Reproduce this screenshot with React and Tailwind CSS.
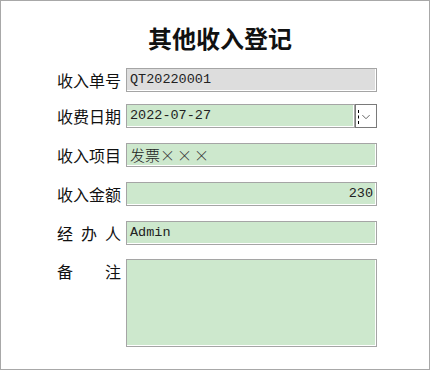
import React from 'react';

const cjk = { fontFamily: '"Noto Sans CJK SC", sans-serif' };
const mono = { fontFamily: '"Liberation Mono", "Noto Sans CJK SC", monospace' };

const Label = ({ chars }) => (
  <div className="w-[64px] flex justify-between text-[16px] leading-[24px] text-[#111]" style={cjk}>
    {chars.map((c, i) => (
      <span key={i}>{c}</span>
    ))}
  </div>
);

const Field = ({ value, bg = 'bg-[#cde8cd]', right }) => (
  <div
    className={`flex-1 h-[24px] border border-[#a5a5a5] ${bg} shadow-[inset_-1px_-1px_0_#fff] flex items-center px-[3px] text-[13.5px] text-[#222] ${right ? 'justify-end' : ''}`}
    style={mono}
  >
    {value}
  </div>
);

const Row = ({ label, children, className = '' }) => (
  <div className={`flex items-start gap-[5px] ${className}`}>
    <Label chars={label} />
    {children}
  </div>
);

export default function App() {
  return (
    <div className="w-[430px] h-[370px] border border-[#a8a8a8] bg-white flex flex-col">
      <div className="mt-[24px] pl-[10px] text-center text-[24px] leading-[26px] font-bold text-[#111]" style={cjk}>
        其他收入登记
      </div>
      <div className="mt-[17px] pl-[56px] w-[376px] flex flex-col">
        <Row label={['收', '入', '单', '号']}>
          <Field value="QT20220001" bg="bg-[#dddddd]" />
        </Row>
        <Row label={['收', '费', '日', '期']} className="mt-[12px]">
          <div className="flex-1 flex">
            <Field value="2022-07-27" />
            <div className="w-[22px] h-[24px] bg-white border border-[#7a7a7a] flex items-center relative">
              <div className="absolute left-[2px] top-[5px] h-[14px] border-l border-dashed border-black" />
              <svg width="22" height="22" viewBox="0 0 22 22" className="block">
                <path d="M7 10 L11 14 L15 10" fill="none" stroke="#555" strokeWidth="1" />
              </svg>
            </div>
          </div>
        </Row>
        <Row label={['收', '入', '项', '目']} className="mt-[15px]">
          <Field
            value={
              <span style={cjk} className="text-[15px] font-light">
                发票<span className="tracking-[2px] text-[#333]">×××</span>
              </span>
            }
          />
        </Row>
        <Row label={['收', '入', '金', '额']} className="mt-[15px]">
          <Field value="230" right />
        </Row>
        <Row label={['经', '办', '人']} className="mt-[15px]">
          <Field value="Admin" />
        </Row>
        <Row label={['备', '注']} className="mt-[14px]">
          <div className="flex-1 h-[88px] border border-[#a5a5a5] bg-[#cde8cd] shadow-[inset_-1px_-1px_0_#fff]" />
        </Row>
      </div>
    </div>
  );
}
